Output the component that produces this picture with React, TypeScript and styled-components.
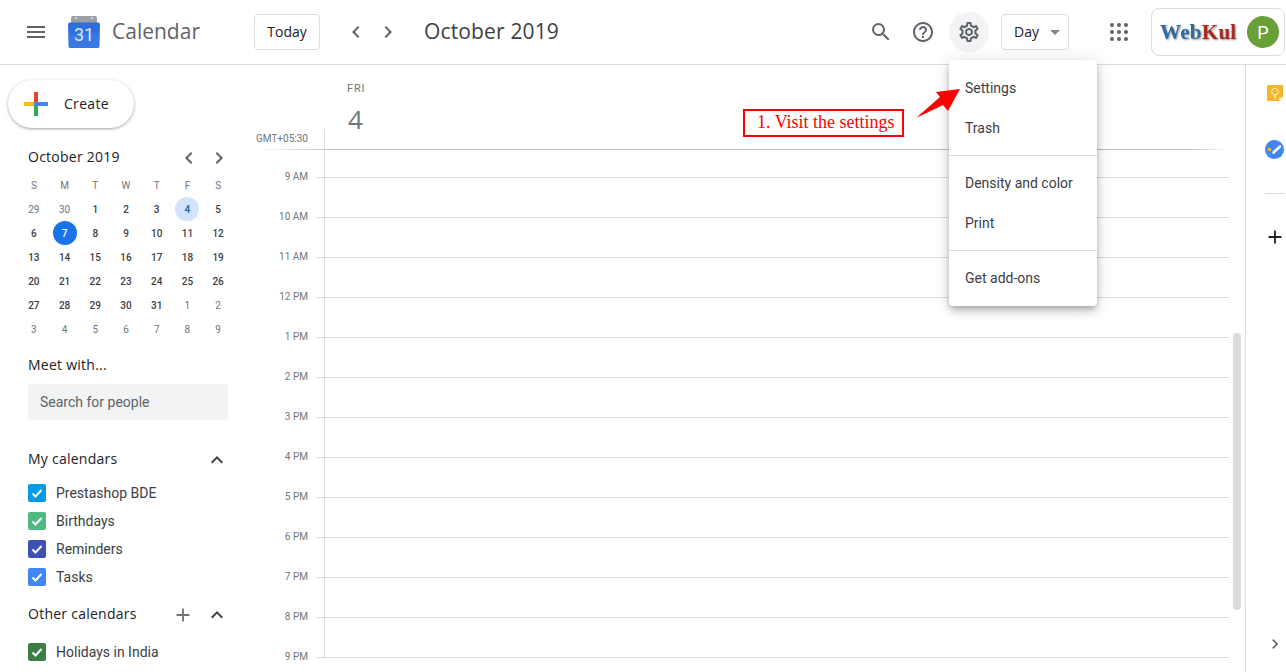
import styled, { createGlobalStyle } from "styled-components";
import {
  MdAdd,
  MdChevronLeft,
  MdChevronRight,
  MdExpandLess,
  MdHelpOutline,
  MdMenu,
  MdOutlineSettings,
  MdSearch,
} from "react-icons/md";

const HOURS = ["9 AM", "10 AM", "11 AM", "12 PM", "1 PM", "2 PM", "3 PM", "4 PM", "5 PM", "6 PM", "7 PM", "8 PM", "9 PM"];
const WEEK = ["S", "M", "T", "W", "T", "F", "S"];
const DAYS = [
  29, 30, 1, 2, 3, 4, 5, 6, 7, 8, 9, 10, 11, 12, 13, 14, 15, 16, 17, 18, 19, 20, 21, 22, 23, 24, 25, 26, 27, 28, 29, 30,
  31, 1, 2, 3, 4, 5, 6, 7, 8, 9,
];
const MY_CALENDARS = [
  { name: "Prestashop BDE", color: "#039be5" },
  { name: "Birthdays", color: "#4fb97f" },
  { name: "Reminders", color: "#3f51b5" },
  { name: "Tasks", color: "#4285f4" },
];

const GlobalStyle = createGlobalStyle`
  html, body {
    margin: 0;
    height: 100%;
    overflow: hidden;
    background: #fff;
    font-family: Roboto, "Liberation Sans", sans-serif;
    color: #3c4043;
  }
`;

const Page = styled.div`
  position: relative;
  width: 1286px;
  height: 672px;
  overflow: hidden;
  display: flex;
  flex-direction: column;
`;

// header
const Header = styled.header`
  box-sizing: border-box;
  height: 65px;
  flex: none;
  display: flex;
  align-items: center;
  border-bottom: 1px solid #dadce0;
`;

const IconButton = styled.div<{ $active?: boolean; $size?: number; $color?: string }>`
  width: ${(p) => p.$size ?? 40}px;
  height: 40px;
  flex: none;
  display: flex;
  align-items: center;
  justify-content: center;
  border-radius: 50%;
  background: ${(p) => (p.$active ? "#f1f3f4" : "transparent")};
  color: ${(p) => p.$color ?? "#5f6368"};
`;

const MenuSlot = styled.div`
  width: 72px;
  display: flex;
  justify-content: center;
  flex: none;
`;

const LogoSlot = styled.div`
  width: 32px;
  height: 32px;
  margin: 0 0 0 -4px;
  flex: none;
`;

const Brand = styled.div`
  font-family: "Open Sans", sans-serif;
  font-size: 21px;
  color: #5f6368;
  margin-left: 12px;
  padding-bottom: 2px;
  flex: 0 0 142px;
`;

const OutlineButton = styled.div<{ $width: number }>`
  box-sizing: border-box;
  width: ${(p) => p.$width}px;
  height: 36px;
  padding-bottom: 2px;
  flex: none;
  display: flex;
  align-items: center;
  border: 1px solid #dadce0;
  border-radius: 4px;
  font-family: "Open Sans", sans-serif;
  font-size: 14px;
  font-weight: 500;
  color: #202124;
`;

const TodayButton = styled(OutlineButton)`
  justify-content: center;
`;

const DayButton = styled(OutlineButton)`
  padding-left: 12px;
  justify-content: space-between;
  margin-left: 12px;
`;

const Caret = styled.span`
  width: 0;
  height: 0;
  margin: 2px 8px 0 0;
  border-left: 5px solid transparent;
  border-right: 5px solid transparent;
  border-top: 5px solid #80868b;
`;

const NavGroup = styled.div`
  display: flex;
  margin-left: 18px;
`;

const MonthTitle = styled.div`
  font-family: "Open Sans", sans-serif;
  font-size: 21px;
  letter-spacing: 0.15px;
  color: #3c4043;
  margin-left: 22px;
  padding-bottom: 3px;
  flex: 1;
`;

const ToolGroup = styled.div`
  display: flex;
  gap: 6px;
`;

const AppsSlot = styled.div`
  width: 40px;
  margin: 0 12px 0 30px;
  display: flex;
  justify-content: center;
`;

const AccountBox = styled.div`
  box-sizing: border-box;
  width: 134px;
  height: 48px;
  margin-right: 1px;
  flex: none;
  display: flex;
  align-items: center;
  justify-content: space-between;
  padding: 0 5px 0 8px;
  border: 1px solid #dadce0;
  border-radius: 8px;
`;

const WebKulMark = styled.span`
  font-family: "Liberation Serif", serif;
  font-size: 21px;
  font-weight: 700;
  letter-spacing: 0.3px;
  color: #2f6aa3;
  text-shadow: 1px 1px 2px rgba(0, 0, 0, 0.45);
  filter: blur(0.4px);
`;

const WebKulAccent = styled.span`
  color: #a62b20;
`;

const Avatar = styled.div`
  width: 32px;
  height: 32px;
  border-radius: 50%;
  background: #689f38;
  color: #fff;
  font-size: 18px;
  display: flex;
  align-items: center;
  justify-content: center;
`;

// body
const Body = styled.div`
  flex: 1;
  min-height: 0;
  display: flex;
`;

const Sidebar = styled.aside`
  width: 256px;
  flex: none;
  display: flex;
  flex-direction: column;
`;

const CreateButton = styled.div`
  box-sizing: border-box;
  width: 126px;
  height: 48px;
  margin: 15px 0 0 8px;
  padding: 0 0 0 16px;
  display: flex;
  align-items: center;
  gap: 16px;
  border-radius: 24px;
  background: #fff;
  box-shadow: 0 1px 2px 0 rgba(60, 64, 67, 0.3), 0 1px 3px 1px rgba(60, 64, 67, 0.15);
  font-family: "Open Sans", sans-serif;
  font-size: 14px;
  font-weight: 500;
  letter-spacing: 0.3px;
  color: #202124;
`;

const CreateLabel = styled.span`
  padding-bottom: 2px;
`;

const MiniHead = styled.div`
  height: 24px;
  margin: 17px 25px 4px 28px;
  display: flex;
  align-items: center;
  justify-content: space-between;
`;

const MiniTitle = styled.div`
  font-family: "Open Sans", sans-serif;
  font-size: 14px;
  font-weight: 500;
  letter-spacing: 0.25px;
  padding-bottom: 2px;
  color: #202124;
`;

const MiniNav = styled.div`
  display: flex;
  gap: 6px;
  margin-top: 2px;
`;

const MiniGrid = styled.div`
  width: 215px;
  margin-left: 18.500px;
  display: grid;
  grid-template-columns: repeat(7, 1fr);
  grid-auto-rows: 24px;
  font-size: 10px;
`;

const MiniCell = styled.div<{ $tone: "head" | "muted" | "normal" | "today" | "selected" }>`
  width: 24px;
  height: 24px;
  justify-self: center;
  display: flex;
  align-items: center;
  justify-content: center;
  border-radius: 50%;
  font-weight: ${(p) => (p.$tone === "normal" || p.$tone === "today" || p.$tone === "selected" ? 500 : 400)};
  color: ${(p) =>
    p.$tone === "today"
      ? "#fff"
      : p.$tone === "selected"
        ? "#185abc"
        : p.$tone === "normal"
          ? "#3c4043"
          : "#70757a"};
  background: ${(p) => (p.$tone === "today" ? "#1a73e8" : p.$tone === "selected" ? "#d2e3fc" : "transparent")};
`;

const SectionTitle = styled.div`
  font-family: "Open Sans", sans-serif;
  font-size: 14px;
  font-weight: 500;
  letter-spacing: 0.25px;
  color: #202124;
`;

const MeetTitle = styled(SectionTitle)`
  height: 20px;
  line-height: 20px;
  margin: 14px 0 9px 28px;
`;

const SearchBox = styled.div`
  box-sizing: border-box;
  width: 200px;
  height: 36px;
  margin-left: 28px;
  padding-left: 12px;
  display: flex;
  align-items: center;
  border-radius: 4px;
  background: #f1f3f4;
  font-size: 14px;
  color: #5f6368;
`;

const SectionHead = styled.div<{ $top: number; $bottom: number }>`
  height: 20px;
  margin: ${(p) => p.$top}px 27px ${(p) => p.$bottom}px 28px;
  display: flex;
  align-items: center;
`;

const SectionTitleGrow = styled(SectionTitle)`
  flex: 1;
  padding-bottom: 4px;
`;

const SectionIcons = styled.div`
  display: flex;
  align-items: center;
  gap: 11px;
`;

const CalendarRow = styled.div`
  height: 28px;
  margin-left: 28px;
  display: flex;
  align-items: center;
  gap: 10px;
  font-size: 14px;
  color: #3c4043;
`;

const CheckBox = styled.span<{ $color: string }>`
  width: 18px;
  height: 18px;
  border-radius: 2px;
  background: ${(p) => p.$color};
  display: flex;
`;

// day view
const Main = styled.main`
  flex: 1;
  min-width: 0;
  display: flex;
  flex-direction: column;
`;

const DayHead = styled.div`
  height: 64px;
  flex: none;
  padding-left: 91px;
  display: flex;
  flex-direction: column;
`;

const DayName = styled.div`
  margin-top: 18px;
  height: 12px;
  line-height: 12px;
  font-size: 11px;
  letter-spacing: 0.8px;
  color: #70757a;
`;

const DayNumber = styled.div`
  margin: 9px 0 0 1px;
  font-family: "Open Sans", sans-serif;
  font-size: 26px;
  line-height: 30px;
  color: #70757a;
`;

const AllDayRow = styled.div`
  height: 21px;
  flex: none;
  margin-right: 16px;
  display: grid;
  grid-template-columns: 68px 1fr;
  background: linear-gradient(to right, transparent, #bdc1c6 8%, #bdc1c6 96%, transparent) bottom / 100% 1px no-repeat;
`;

const ZoneLabel = styled.div`
  font-size: 10px;
  line-height: 20px;
  color: #70757a;
  white-space: nowrap;
`;

const AllDayCell = styled.div`
  border-left: 1px solid #dadce0;
`;

const HourRow = styled.div<{ $height: number }>`
  height: ${(p) => p.$height}px;
  flex: none;
  margin-right: 16px;
  display: grid;
  grid-template-columns: 60px 8px 1fr;
`;

const HourLabel = styled.div`
  align-self: end;
  margin-bottom: -5px;
  padding-right: 8px;
  font-size: 10px;
  line-height: 12px;
  text-align: right;
  color: #70757a;
`;

const HourTick = styled.div`
  border-bottom: 1px solid #dadce0;
`;

const HourCell = styled.div`
  border-left: 1px solid #dadce0;
  border-bottom: 1px solid #dadce0;
`;

const Rail = styled.aside`
  box-sizing: border-box;
  width: 41px;
  flex: none;
  padding: 20px 1px 18px 18px;
  display: flex;
  flex-direction: column;
  align-items: center;
  border-left: 1px solid #dadce0;
`;

const RailSlot = styled.div<{ $mt: number }>`
  margin-top: ${(p) => p.$mt}px;
  display: flex;
`;

const RailDivider = styled.div`
  width: 20px;
  margin-top: 34px;
  border-top: 1px solid #dadce0;
`;

const RailBottom = styled.div`
  margin-top: auto;
  display: flex;
  color: #5f6368;
`;

// overlays
const Scrollbar = styled.div`
  position: absolute;
  left: 1233px;
  top: 333px;
  width: 8px;
  height: 277px;
  border-radius: 4px;
  background: #dadce0;
`;

const SettingsMenu = styled.div`
  position: absolute;
  left: 949px;
  top: 60px;
  width: 148px;
  padding: 8px 0;
  background: #fff;
  border-radius: 4px;
  box-shadow: 0 3px 5px -1px rgba(0, 0, 0, 0.2), 0 6px 10px 0 rgba(0, 0, 0, 0.14), 0 1px 18px 0 rgba(0, 0, 0, 0.12);
`;

const SettingsItem = styled.div`
  height: 40px;
  line-height: 40px;
  padding-left: 16px;
  font-size: 14px;
  color: #3c4043;
`;

const MenuDivider = styled.div`
  margin: 7px 0;
  border-top: 1px solid #dadce0;
`;

const NoteBox = styled.div`
  position: absolute;
  left: 743px;
  top: 109px;
  box-sizing: border-box;
  width: 161px;
  height: 28px;
  padding-left: 12px;
  border: 2px solid #f00;
  background: #fff;
  font-family: "Liberation Serif", serif;
  font-size: 18px;
  line-height: 22px;
  color: #f00;
  white-space: nowrap;
`;

const NoteArrow = styled.svg`
  position: absolute;
  left: 910px;
  top: 80px;
`;

const CalendarLogo = () => (
  <svg width="32" height="32" viewBox="0 0 32 32">
    <path d="M3 2a2 2 0 0 1 2-2h22a2 2 0 0 1 2 2v6H3z" fill="#9aa0a6" />
    <circle cx="8" cy="2" r="1" fill="#e8eaed" />
    <circle cx="24" cy="2" r="1" fill="#e8eaed" />
    <path d="M1 6.500h30l1 1.500-.5 22a2 2 0 0 1-2 2h-27a2 2 0 0 1-2-2L0 8z" fill="#2f6fdd" />
    <rect x="1" y="18" width="30" height="14" rx="1" fill="#3f7fe6" opacity="0.6" />
    <text x="16" y="25" textAnchor="middle" fontFamily="Roboto, sans-serif" fontSize="18" fill="#dfe8f7">
      31
    </text>
  </svg>
);

const CreatePlus = () => (
  <svg width="24" height="24" viewBox="0 0 24 24">
    <rect x="10" y="0" width="4" height="10" fill="#ea4335" />
    <rect x="14" y="10" width="10" height="4" fill="#4285f4" />
    <rect x="10" y="14" width="4" height="10" fill="#34a853" />
    <rect x="0" y="10" width="10" height="4" fill="#fbbc04" />
    <rect x="10" y="10" width="4" height="4" fill="#4285f4" />
  </svg>
);

const AppsDots = () => (
  <svg width="18" height="18" viewBox="0 0 18 18" fill="#5f6368">
    {[2, 9, 16].flatMap((y) => [2, 9, 16].map((x) => <circle key={`${x}-${y}`} cx={x} cy={y} r="2" />))}
  </svg>
);

const KeepIcon = () => (
  <svg width="16" height="16" viewBox="0 0 16 16">
    <path d="M1 0h14a1 1 0 0 1 1 1v11l-4 4H1a1 1 0 0 1-1-1V1a1 1 0 0 1 1-1z" fill="#f6b52d" />
    <path d="M16 12h-4v4z" fill="#fde3a0" />
    <circle cx="8" cy="6.500" r="3.300" fill="none" stroke="#fff3d0" strokeWidth="1" />
    <path d="M6.500 11h3M6.800 13h2.400" stroke="#fff3d0" strokeWidth="1" />
  </svg>
);

const TasksIcon = () => (
  <svg width="19" height="19" viewBox="0 0 19 19">
    <circle cx="9.500" cy="9.500" r="9.500" fill="#4285f4" />
    <path d="M8.500 12.500L15 6.500" stroke="#fff" strokeWidth="2.600" strokeLinecap="round" />
    <circle cx="4.500" cy="9.500" r="1.800" fill="#f6b52d" />
  </svg>
);

const RowCheck = () => (
  <svg width="18" height="18" viewBox="0 0 18 18">
    <polyline points="4.500,9.500 7.500,12.500 13.500,6" fill="none" stroke="#fff" strokeWidth="2" />
  </svg>
);

const App = () => {
  const firstNextMonth = DAYS.lastIndexOf(31) + 1;

  const toneOf = (index: number) => {
    if (index < 2 || index >= firstNextMonth) return "muted" as const;
    if (index === 5) return "selected" as const;
    if (index === 8) return "today" as const;
    return "normal" as const;
  };

  return (
    <>
      <GlobalStyle />
      <Page>
        <Header>
          <MenuSlot>
            <IconButton $color="#5f6368">
              <MdMenu size={24} />
            </IconButton>
          </MenuSlot>
          <LogoSlot>
            <CalendarLogo />
          </LogoSlot>
          <Brand>Calendar</Brand>
          <TodayButton $width={66}>Today</TodayButton>
          <NavGroup>
            <IconButton $size={36}>
              <MdChevronLeft size={24} />
            </IconButton>
            <IconButton $size={28}>
              <MdChevronRight size={24} />
            </IconButton>
          </NavGroup>
          <MonthTitle>October 2019</MonthTitle>
          <ToolGroup>
            <IconButton $size={33}>
              <MdSearch size={24} />
            </IconButton>
            <IconButton>
              <MdHelpOutline size={24} />
            </IconButton>
            <IconButton $active>
              <MdOutlineSettings size={24} />
            </IconButton>
          </ToolGroup>
          <DayButton $width={68}>
            Day
            <Caret />
          </DayButton>
          <AppsSlot>
            <AppsDots />
          </AppsSlot>
          <AccountBox>
            <WebKulMark>
              Web<WebKulAccent>Kul</WebKulAccent>
            </WebKulMark>
            <Avatar>P</Avatar>
          </AccountBox>
        </Header>

        <Body>
          <Sidebar>
            <CreateButton>
              <CreatePlus />
              <CreateLabel>Create</CreateLabel>
            </CreateButton>

            <MiniHead>
              <MiniTitle>October 2019</MiniTitle>
              <MiniNav>
                <MdChevronLeft size={24} color="#5f6368" />
                <MdChevronRight size={24} color="#5f6368" />
              </MiniNav>
            </MiniHead>
            <MiniGrid>
              {WEEK.map((d, i) => (
                <MiniCell key={`w${i}`} $tone="head">
                  {d}
                </MiniCell>
              ))}
              {DAYS.map((d, i) => (
                <MiniCell key={i} $tone={toneOf(i)}>
                  {d}
                </MiniCell>
              ))}
            </MiniGrid>

            <MeetTitle>Meet with...</MeetTitle>
            <SearchBox>Search for people</SearchBox>

            <SectionHead $top={30} $bottom={9}>
              <SectionTitleGrow>My calendars</SectionTitleGrow>
              <MdExpandLess size={24} color="#3c4043" />
            </SectionHead>
            {MY_CALENDARS.map((c) => (
              <CalendarRow key={c.name}>
                <CheckBox $color={c.color}>
                  <RowCheck />
                </CheckBox>
                {c.name}
              </CalendarRow>
            ))}

            <SectionHead $top={14} $bottom={13}>
              <SectionTitleGrow>Other calendars</SectionTitleGrow>
              <SectionIcons>
                <MdAdd size={22} color="#70757a" />
                <MdExpandLess size={24} color="#3c4043" />
              </SectionIcons>
            </SectionHead>
            <CalendarRow>
              <CheckBox $color="#3b7f46">
                <RowCheck />
              </CheckBox>
              Holidays in India
            </CalendarRow>
          </Sidebar>

          <Main>
            <DayHead>
              <DayName>FRI</DayName>
              <DayNumber>4</DayNumber>
            </DayHead>
            <AllDayRow>
              <ZoneLabel>GMT+05:30</ZoneLabel>
              <AllDayCell />
            </AllDayRow>
            <HourRow $height={28}>
              <HourLabel>{HOURS[0]}</HourLabel>
              <HourTick />
              <HourCell />
            </HourRow>
            {HOURS.slice(1).map((h) => (
              <HourRow key={h} $height={40}>
                <HourLabel>{h}</HourLabel>
                <HourTick />
                <HourCell />
              </HourRow>
            ))}
          </Main>

          <Rail>
            <KeepIcon />
            <RailSlot $mt={39}>
              <TasksIcon />
            </RailSlot>
            <RailDivider />
            <RailSlot $mt={32}>
              <MdAdd size={22} color="#202124" />
            </RailSlot>
            <RailBottom>
              <MdChevronRight size={20} />
            </RailBottom>
          </Rail>
        </Body>

        <Scrollbar />
        <SettingsMenu>
          <SettingsItem>Settings</SettingsItem>
          <SettingsItem>Trash</SettingsItem>
          <MenuDivider />
          <SettingsItem>Density and color</SettingsItem>
          <SettingsItem>Print</SettingsItem>
          <MenuDivider />
          <SettingsItem>Get add-ons</SettingsItem>
        </SettingsMenu>
        <NoteBox>1. Visit the settings</NoteBox>
        <NoteArrow width="60" height="50" viewBox="0 0 60 50">
          <polygon points="6,38 30,17 26,12 50,9 38,31 33,25" fill="#f00" />
        </NoteArrow>
      </Page>
    </>
  );
};

export default App;
